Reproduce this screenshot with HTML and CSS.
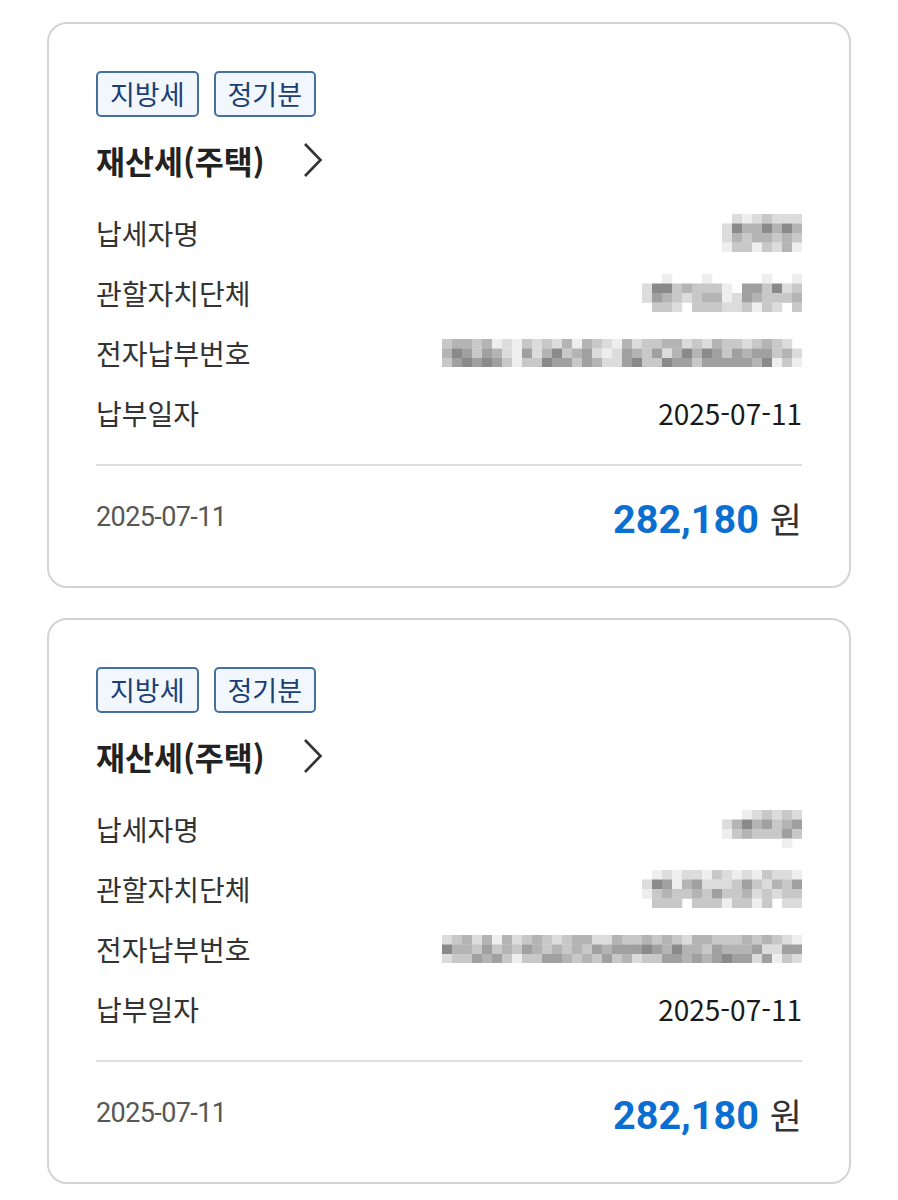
FILE: index.html
```html
<!DOCTYPE html>
<html lang="ko">
<head>
<meta charset="utf-8">
<title>납부내역</title>
<link rel="stylesheet" href="styles.css">
</head>
<body>
<main class="list">
  <section class="card">
    <div class="tags"><span class="tag">지방세</span><span class="tag">정기분</span></div>
    <h2 class="title"><span>재산세(주택)</span><svg class="chev" viewBox="0 0 20 36"><path d="M2 2 L17.5 18 L2 34"/></svg></h2>
    <dl class="rows">
      <div class="row"><dt>납세자명</dt><dd><svg class="mosaic" data-cells="02123222/26446464/24344343/13313241"></svg></dd></div>
      <div class="row"><dt>관할자치단체</dt><dd><svg class="mosaic" data-cells="0010001000001001/2663433310553623/2543234412543334/0332033322313203"></svg></dd></div>
      <div class="row"><dt>전자납부번호</dt><dd><svg class="mosaic" data-cells="344341213232414321423344232433234320/465354215246345212543524646535455342/356565313365535422563365535555546131"></svg></dd></div>
      <div class="row"><dt>납부일자</dt><dd class="val">2025-07-11</dd></div>
    </dl>
    <div class="foot"><span class="date">2025-07-11</span><span class="amount"><b>282,180</b><span class="won">원</span></span></div>
  </section>

  <section class="card">
    <div class="tags"><span class="tag">지방세</span><span class="tag">정기분</span></div>
    <h2 class="title"><span>재산세(주택)</span><svg class="chev" viewBox="0 0 20 36"><path d="M2 2 L17.5 18 L2 34"/></svg></h2>
    <dl class="rows">
      <div class="row"><dt>납세자명</dt><dd><svg class="mosaic" data-cells="00123232/24645345/13433353/00000010"></svg></dd></div>
      <div class="row"><dt>관할자치단체</dt><dd><svg class="mosaic" data-cells="0121221321213221/2651452223532435/1343343533423233/0333033313313022"></svg></dd></div>
      <div class="row"><dt>전자납부번호</dt><dd><svg class="mosaic" data-cells="234241423432344224334343244333434321/644353435434343545556546443544452255/233545313355434353423355454565525132"></svg></dd></div>
      <div class="row"><dt>납부일자</dt><dd class="val">2025-07-11</dd></div>
    </dl>
    <div class="foot"><span class="date">2025-07-11</span><span class="amount"><b>282,180</b><span class="won">원</span></span></div>
  </section>
</main>
<script src="script.js"></script>
</body>
</html>
```

FILE: styles.css
```css
html, body {
  margin: 0;
  background: #ffffff;
}
body {
  font-family: "Noto Sans CJK KR", "Noto Sans", sans-serif;
  color: #222;
}
.list {
  display: flex;
  flex-direction: column;
  gap: 30px;
  padding: 22px 47px 16px 47px;
}
.card {
  border: 2px solid #d4d4d4;
  border-radius: 20px;
  padding: 47px 47px 45px 47px;
  background: #fff;
}
.tags {
  display: flex;
  gap: 15px;
}
.tag {
  box-sizing: border-box;
  height: 46px;
  padding: 0 12px;
  border: 2px solid #44709f;
  border-radius: 5px;
  background: #f1f7fd;
  color: #1c3f73;
  font-size: 27px;
  line-height: 41px;
}
.title {
  margin: 20px 0 0;
  height: 46px;
  display: flex;
  align-items: center;
  gap: 38px;
  font-size: 31.5px;
  font-weight: 700;
  color: #222;
}
.chev {
  width: 20px;
  height: 36px;
  fill: none;
  stroke: #333;
  stroke-width: 2.6;
}
.rows {
  margin: 20px 0 0;
}
.row {
  height: 60px;
  display: flex;
  align-items: center;
  justify-content: space-between;
}
.row dt {
  font-size: 28px;
  color: #333;
}
.row dd {
  margin: 0;
}
.mosaic {
  display: block;
}
.val {
  font-size: 28px;
  color: #1a1a1a;
}
.foot {
  margin-top: 21px;
  border-top: 2px solid #dedede;
  padding-top: 27px;
  height: 48px;
  display: flex;
  align-items: center;
  justify-content: space-between;
}
.date {
  font-family: Roboto, "Noto Sans", sans-serif;
  font-size: 27px;
  letter-spacing: -0.6px;
  color: #575757;
}
.amount {
  display: flex;
  align-items: baseline;
  gap: 11px;
}
.amount b {
  font-family: Roboto, "Noto Sans", sans-serif;
  font-weight: 700;
  font-size: 39.5px;
  color: #0a6fd0;
}
.won {
  font-size: 35px;
  color: #333;
}
```

FILE: script.js
```js
(function () {
  var shades = [null, '#eeeeee', '#dcdcdc', '#c8c8c8', '#b4b4b4', '#a0a0a0', '#8a8a8a', '#757575'];
  var NS = 'http://www.w3.org/2000/svg';
  document.querySelectorAll('svg.mosaic').forEach(function (svg) {
    var rows = svg.getAttribute('data-cells').split('/');
    var cw = 10, ch = 9.5;
    var cols = Math.max.apply(null, rows.map(function (r) { return r.length; }));
    var w = cols * cw, h = rows.length * ch;
    svg.setAttribute('width', w);
    svg.setAttribute('height', h);
    svg.setAttribute('viewBox', '0 0 ' + w + ' ' + h);
    rows.forEach(function (r, y) {
      r.split('').forEach(function (c, x) {
        var s = shades[+c];
        if (!s) return;
        var rect = document.createElementNS(NS, 'rect');
        rect.setAttribute('x', x * cw);
        rect.setAttribute('y', y * ch);
        rect.setAttribute('width', cw + 0.3);
        rect.setAttribute('height', ch + 0.3);
        rect.setAttribute('fill', s);
        svg.appendChild(rect);
      });
    });
  });
})();
```
